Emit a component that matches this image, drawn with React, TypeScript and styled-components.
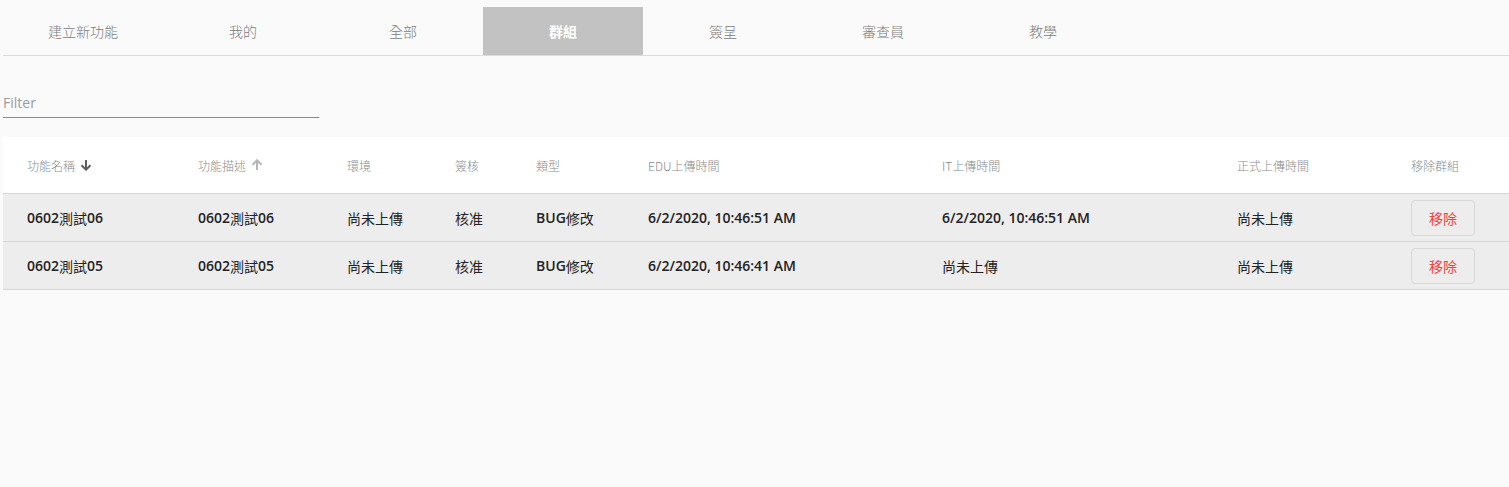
import React from "react";
import styled, { createGlobalStyle } from "styled-components";

const GlobalStyle = createGlobalStyle`
  html, body { margin: 0; padding: 0; background: #fafafa; }
  body { font-family: "Open Sans", "Noto Sans CJK TC", sans-serif; }
`;

const Page = styled.div`
  padding: 7px 0 0 3px;
  min-height: 480px;
  box-sizing: border-box;
`;

const TabBar = styled.nav`
  display: flex;
  height: 48px;
  border-bottom: 1px solid #dcdcdc;
`;

const Tab = styled.div<{ $active?: boolean }>`
  width: 160px;
  display: flex;
  align-items: center;
  justify-content: center;
  font-family: "Noto Sans CJK TC", sans-serif;
  font-size: 14px;
  font-weight: ${(p) => (p.$active ? 700 : 300)};
  color: ${(p) => (p.$active ? "#ffffff" : "#7a7a7a")};
  background: ${(p) => (p.$active ? "#c2c2c2" : "transparent")};
`;

const FilterField = styled.div`
  margin-top: 30px;
  width: 316px;
  height: 32px;
  box-sizing: border-box;
  padding-top: 1px;
  border-bottom: 1px solid #8a8a8a;
  display: flex;
  align-items: center;
  font-size: 14px;
  color: #9a9a9a;
`;

const Table = styled.div`
  margin-top: 19px;
  display: grid;
  grid-template-columns: 171px 149px 108px 81px 112px 294px 295px 174px 1fr;
`;

const HeaderCell = styled.div`
  height: 56px;
  background: #ffffff;
  border-bottom: 1px solid #d6d6d6;
  padding-left: 24px;
  display: flex;
  align-items: center;
  gap: 5px;
  font-family: "Noto Sans CJK TC", sans-serif;
  font-size: 12px;
  font-weight: 300;
  color: #8a8a8a;
`;

const Cell = styled.div`
  height: 47px;
  background: #ededed;
  border-bottom: 1px solid #d6d6d6;
  padding-left: 24px;
  display: flex;
  align-items: center;
  font-size: 14px;
  color: #222;
  white-space: nowrap;
`;

const Latin = styled.span`
  font-family: "Open Sans", sans-serif;
  font-weight: 600;
`;

const Cjk = styled.span`
  font-family: "Noto Sans CJK TC", sans-serif;
  font-weight: 400;
`;

const RemoveButton = styled.button`
  width: 64px;
  height: 36px;
  border: 1px solid #d8d8d8;
  border-radius: 4px;
  background: transparent;
  color: #f44336;
  font-family: "Noto Sans CJK TC", sans-serif;
  font-size: 14px;
  font-weight: 400;
  padding: 0;
  cursor: pointer;
`;

const SortIcon = ({ dir, color }: { dir: "up" | "down"; color: string }) => (
  <svg width="12" height="12" viewBox="0 0 12 12" style={{ transform: dir === "up" ? "rotate(180deg)" : undefined }}>
    <path d="M6 1 V10.5" stroke={color} strokeWidth="2" fill="none" />
    <path d="M1.5 6.2 L6 10.7 L10.5 6.2" stroke={color} strokeWidth="2" fill="none" />
  </svg>
);

const Mixed = ({ text }: { text: string }) => {
  const parts = text.match(/[\x00-\x7F]+|[^\x00-\x7F]+/g) || [];
  return (
    <>
      {parts.map((p, i) =>
        /^[\x00-\x7F]+$/.test(p) ? <Latin key={i}>{p}</Latin> : <Cjk key={i}>{p}</Cjk>
      )}
    </>
  );
};

const tabs = ["建立新功能", "我的", "全部", "群組", "簽呈", "審查員", "教學"];

const rows = [
  ["0602測試06", "0602測試06", "尚未上傳", "核准", "BUG修改", "6/2/2020, 10:46:51 AM", "6/2/2020, 10:46:51 AM", "尚未上傳"],
  ["0602測試05", "0602測試05", "尚未上傳", "核准", "BUG修改", "6/2/2020, 10:46:41 AM", "尚未上傳", "尚未上傳"],
];

export default function App() {
  return (
    <>
      <GlobalStyle />
      <Page>
        <TabBar>
          {tabs.map((t) => (
            <Tab key={t} $active={t === "群組"}>{t}</Tab>
          ))}
        </TabBar>
        <FilterField>Filter</FilterField>
        <Table>
          <HeaderCell>功能名稱 <SortIcon dir="down" color="#5f5f5f" /></HeaderCell>
          <HeaderCell>功能描述 <SortIcon dir="up" color="#b5b5b5" /></HeaderCell>
          <HeaderCell>環境</HeaderCell>
          <HeaderCell>簽核</HeaderCell>
          <HeaderCell>類型</HeaderCell>
          <HeaderCell>EDU上傳時間</HeaderCell>
          <HeaderCell>IT上傳時間</HeaderCell>
          <HeaderCell>正式上傳時間</HeaderCell>
          <HeaderCell>移除群組</HeaderCell>
          {rows.map((r, ri) => (
            <React.Fragment key={ri}>
              {r.map((c, ci) => (
                <Cell key={ci}><Mixed text={c} /></Cell>
              ))}
              <Cell><RemoveButton>移除</RemoveButton></Cell>
            </React.Fragment>
          ))}
        </Table>
      </Page>
    </>
  );
}
